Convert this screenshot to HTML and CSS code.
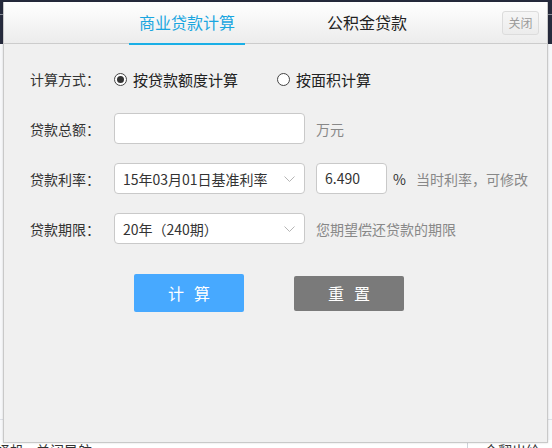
FILE: index.html
```html
<!DOCTYPE html>
<html lang="zh-CN">
<head>
<meta charset="utf-8">
<title>房贷计算器</title>
<link rel="stylesheet" href="styles.css">
</head>
<body>
<div class="page">
  <div class="page-top"><div class="page-top-line"></div></div>
  <div class="page-main"></div>
  <div class="page-rule"></div>
  <div class="page-foot">
    <span class="pf-left">择机</span>
    <span class="pf-mid">关闭导航</span>
    <span class="pf-right">合翻出给</span>
  </div>
</div>

<div class="dialog">
  <div class="dlg-head">
    <div class="tabs">
      <div class="tab active">商业贷款计算</div>
      <div class="tab">公积金贷款</div>
    </div>
    <div class="close-btn">关闭</div>
  </div>
  <div class="dlg-body">
    <div class="row row-first">
      <div class="label">计算方式：</div>
      <div class="radio radio-gap"><span class="circle checked"></span><span class="radio-text">按贷款额度计算</span></div>
      <div class="radio"><span class="circle"></span><span class="radio-text">按面积计算</span></div>
    </div>
    <div class="row">
      <div class="label">贷款总额：</div>
      <div class="field"></div>
      <div class="unit">万元</div>
    </div>
    <div class="row">
      <div class="label">贷款利率：</div>
      <div class="field select">
        <span>15年03月01日基准利率</span>
        <svg class="chev" width="11" height="6" viewBox="0 0 11 6"><polyline points="0.5,0.5 5.5,5.5 10.5,0.5" fill="none" stroke="#b5b5b5" stroke-width="1"/></svg>
      </div>
      <div class="field rate">6.490</div>
      <div class="pct">%</div>
      <div class="hint">当时利率，可修改</div>
    </div>
    <div class="row">
      <div class="label">贷款期限：</div>
      <div class="field select">
        <span>20年（240期）</span>
        <svg class="chev" width="11" height="6" viewBox="0 0 11 6"><polyline points="0.5,0.5 5.5,5.5 10.5,0.5" fill="none" stroke="#b5b5b5" stroke-width="1"/></svg>
      </div>
      <div class="unit">您期望偿还贷款的期限</div>
    </div>
    <div class="btn-row">
      <div class="btn btn-calc"><span>计</span><span>算</span></div>
      <div class="btn btn-reset"><span>重</span><span>置</span></div>
    </div>
  </div>
</div>
</body>
</html>
```

FILE: styles.css
```css
* { box-sizing: border-box; }
html, body {
  margin: 0;
  padding: 0;
  width: 552px;
  height: 448px;
  overflow: hidden;
  background: #f7f8fa;
  font-family: "Noto Sans CJK SC", "Noto Sans", sans-serif;
  color: #333;
}

/* background page */
.page { width: 552px; }
.page-top {
  height: 44px;
  background: #262b3d;
  padding-top: 14px;
}
.page-top-line { height: 1px; background: #8a8e99; }
.page-main { height: 375px; background: #f7f8fa; }
.page-rule { height: 1px; background: #dde0e6; }
.page-foot {
  display: flex;
  align-items: flex-start;
  height: 28px;
  margin-top: 20px;
  font-size: 14px;
  line-height: 20px;
  color: #333;
  background: #fff;
}
.pf-left { margin-left: -4px; }
.pf-mid { margin-left: 12px; }
.pf-right {
  margin-left: auto;
  margin-right: 12px;
  padding-left: 16px;
  border-left: 1px solid #cfd3da;
}

/* dialog */
.dialog {
  position: absolute;
  left: 3px;
  top: 2px;
  width: 545px;
  height: 441px;
  background: #f0f0f0;
  border: 1px solid #c9c9c9;
  border-top: none;
  box-shadow: 0 0 2px rgba(0,0,0,0.15);
}
.dlg-head {
  position: relative;
  height: 42px;
  background: linear-gradient(#ffffff, #ececec);
  border-bottom: 1px solid #cccccc;
}
.tabs {
  display: flex;
  justify-content: center;
  gap: 64px;
  padding-left: 3px;
}
.tab {
  position: relative;
  width: 116px;
  height: 41px;
  line-height: 41px;
  text-align: center;
  font-size: 16px;
  color: #222;
}
.tab.active { color: #1aa6e0; }
.tab.active::after {
  content: "";
  position: absolute;
  left: 0;
  right: 0;
  bottom: -2px;
  height: 2px;
  background: #1aafe6;
}
.close-btn {
  position: absolute;
  right: 8px;
  top: 9px;
  width: 37px;
  height: 24px;
  line-height: 22px;
  text-align: center;
  font-size: 12px;
  color: #9a9a9a;
  border: 1px solid #dcdcdc;
  border-radius: 3px;
  background: linear-gradient(#f6f6f6, #ececec);
}

.dlg-body { padding: 20px 0 0 26px; }
.row {
  display: flex;
  align-items: center;
  height: 31px;
  margin-bottom: 19px;
}
.row-first { height: 30px; }
.label {
  width: 84px;
  font-size: 14px;
  color: #333;
}
.radio {
  display: flex;
  align-items: center;
  font-size: 15px;
  color: #222;
}
.radio-gap { margin-right: 39px; }
.circle {
  position: relative;
  width: 13px;
  height: 13px;
  margin-right: 6px;
  border: 1px solid #444;
  border-radius: 50%;
  background: #fff;
}
.circle.checked::after {
  content: "";
  position: absolute;
  left: 2px;
  top: 2px;
  width: 7px;
  height: 7px;
  border-radius: 50%;
  background: #333;
}
.field {
  width: 191px;
  height: 31px;
  border: 1px solid #c9c9c9;
  border-radius: 4px;
  background: #fff;
  font-size: 14px;
  color: #333;
}
.select {
  display: flex;
  align-items: center;
  justify-content: space-between;
  padding: 0 9px 0 8px;
}
.chev { display: block; }
.rate {
  width: 71px;
  margin-left: 11px;
  padding-left: 8px;
  line-height: 29px;
}
.pct {
  margin-left: 6px;
  font-size: 14px;
  color: #333;
}
.hint {
  margin-left: 10px;
  font-size: 14px;
  color: #888;
}
.unit {
  margin-left: 11px;
  font-size: 14px;
  color: #888;
}
.btn-row {
  display: flex;
  align-items: center;
  gap: 50px;
  height: 38px;
  margin-top: 30px;
  padding-left: 104px;
}
.btn {
  display: flex;
  align-items: center;
  justify-content: center;
  gap: 10px;
  width: 110px;
  border-radius: 2px;
  color: #fff;
  font-size: 16px;
}
.btn-calc { height: 38px; background: #47a9ff; }
.btn-reset { height: 35px; background: #7a7a7a; }
```
